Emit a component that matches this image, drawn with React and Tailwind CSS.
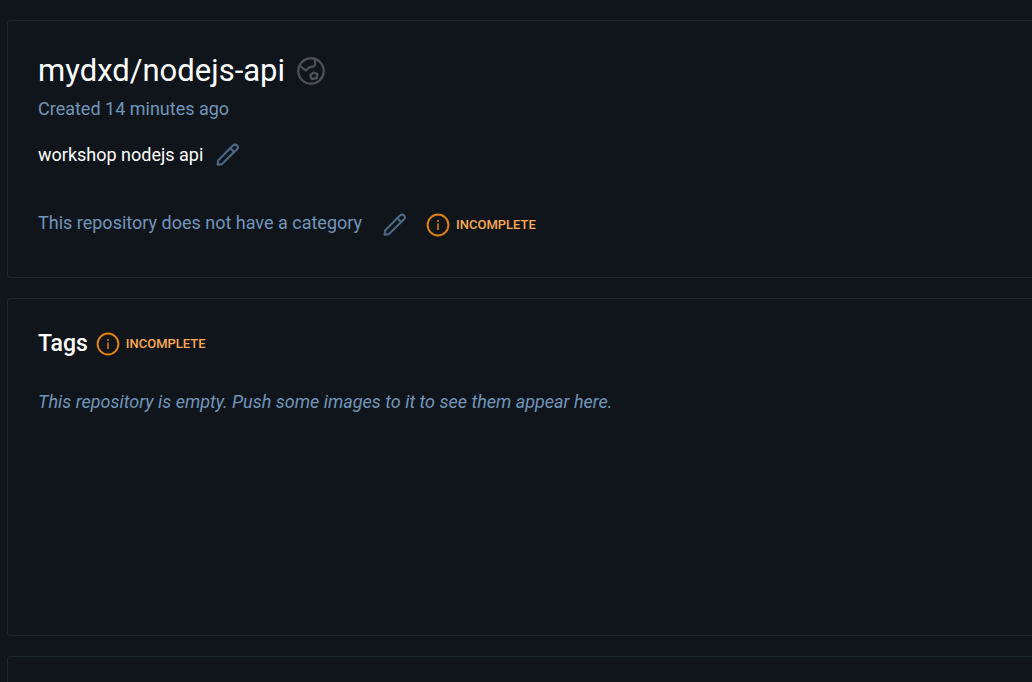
import React from "react";

function GlobeIcon() {
  return (
    <svg
      className="size-7 shrink-0 text-[#4d4f52]"
      viewBox="0 0 28 28"
      fill="none"
      stroke="currentColor"
      strokeWidth="2.4"
      strokeLinejoin="round"
      role="img"
      aria-label="Public"
    >
      <circle cx="14" cy="14" r="12.7" />
      <path d="M2.4 8.6 8.8 13.4 12.6 10.2 17 9.4 18.2 7.4 17.8 2" />
      <path d="M13.4 18.2 16.2 15.6 20.4 17.2 19.8 21 14.8 22.2Z" />
    </svg>
  );
}

function PencilIcon() {
  return (
    <svg
      className="size-6"
      viewBox="0 0 24 24"
      fill="none"
      stroke="currentColor"
      strokeWidth="2.1"
      strokeLinejoin="round"
      strokeLinecap="round"
      aria-hidden="true"
    >
      <path d="M2.6 21.6 3.1 17.4 17.9 2.6Q20 .7 22 2.4T21.7 6.6L7 21.1Z" />
      <path d="M15.4 5.2 19.1 8.9" />
    </svg>
  );
}

function InfoIcon() {
  return (
    <svg
      className="size-6 shrink-0 text-[#e08011]"
      viewBox="0 0 24 24"
      fill="none"
      stroke="currentColor"
      aria-hidden="true"
    >
      <circle cx="12" cy="12" r="10.4" strokeWidth="2" />
      <path d="M12 10.5V17" strokeWidth="1.5" />
      <path d="M12 7V8.8" strokeWidth="1.7" />
    </svg>
  );
}

function EditButton({ label }) {
  return (
    <button type="button" aria-label={label} className="shrink-0 text-[#4b6985]">
      <PencilIcon />
    </button>
  );
}

function Incomplete() {
  return (
    <span className="flex items-center gap-1.5">
      <InfoIcon />
      <span className="text-[13px] font-medium leading-6 text-[#fcab55]">INCOMPLETE</span>
    </span>
  );
}

function Panel({ className = "", children }) {
  return (
    <section className={`rounded-l-sm border border-r-0 border-[#1c262d] px-[30px] ${className}`}>
      {children}
    </section>
  );
}

export default function App() {
  return (
    <main className="flex h-screen flex-col gap-5 overflow-hidden bg-[#10151b] pl-[7px] pt-5 font-['Roboto',sans-serif] text-lg text-white">
      <Panel className="shrink-0 pb-10 pt-7">
        <div className="flex items-center gap-3">
          <h1 className="text-[31px] leading-11">mydxd/nodejs-api</h1>
          <GlobeIcon />
        </div>
        <p className="leading-8 text-[#7196ba]">Created 14 minutes ago</p>
        <div className="mt-4 flex items-center gap-3">
          <p className="leading-7">workshop nodejs api</p>
          <EditButton label="Edit description" />
        </div>
        <div className="mt-10 flex items-end gap-5">
          <p className="leading-7 text-[#7196ba]">This repository does not have a category</p>
          <EditButton label="Edit category" />
          <Incomplete />
        </div>
      </Panel>

      <Panel className="min-h-[338px] shrink-0 pt-[29px]">
        <div className="flex items-center gap-2">
          <h2 className="text-[23px] font-medium leading-8">Tags</h2>
          <Incomplete />
        </div>
        <p className="mt-7 italic leading-7 text-[#7196ba]">
          This repository is empty. Push some images to it to see them appear here.
        </p>
      </Panel>

      <Panel className="min-h-10 shrink-0" />
    </main>
  );
}
